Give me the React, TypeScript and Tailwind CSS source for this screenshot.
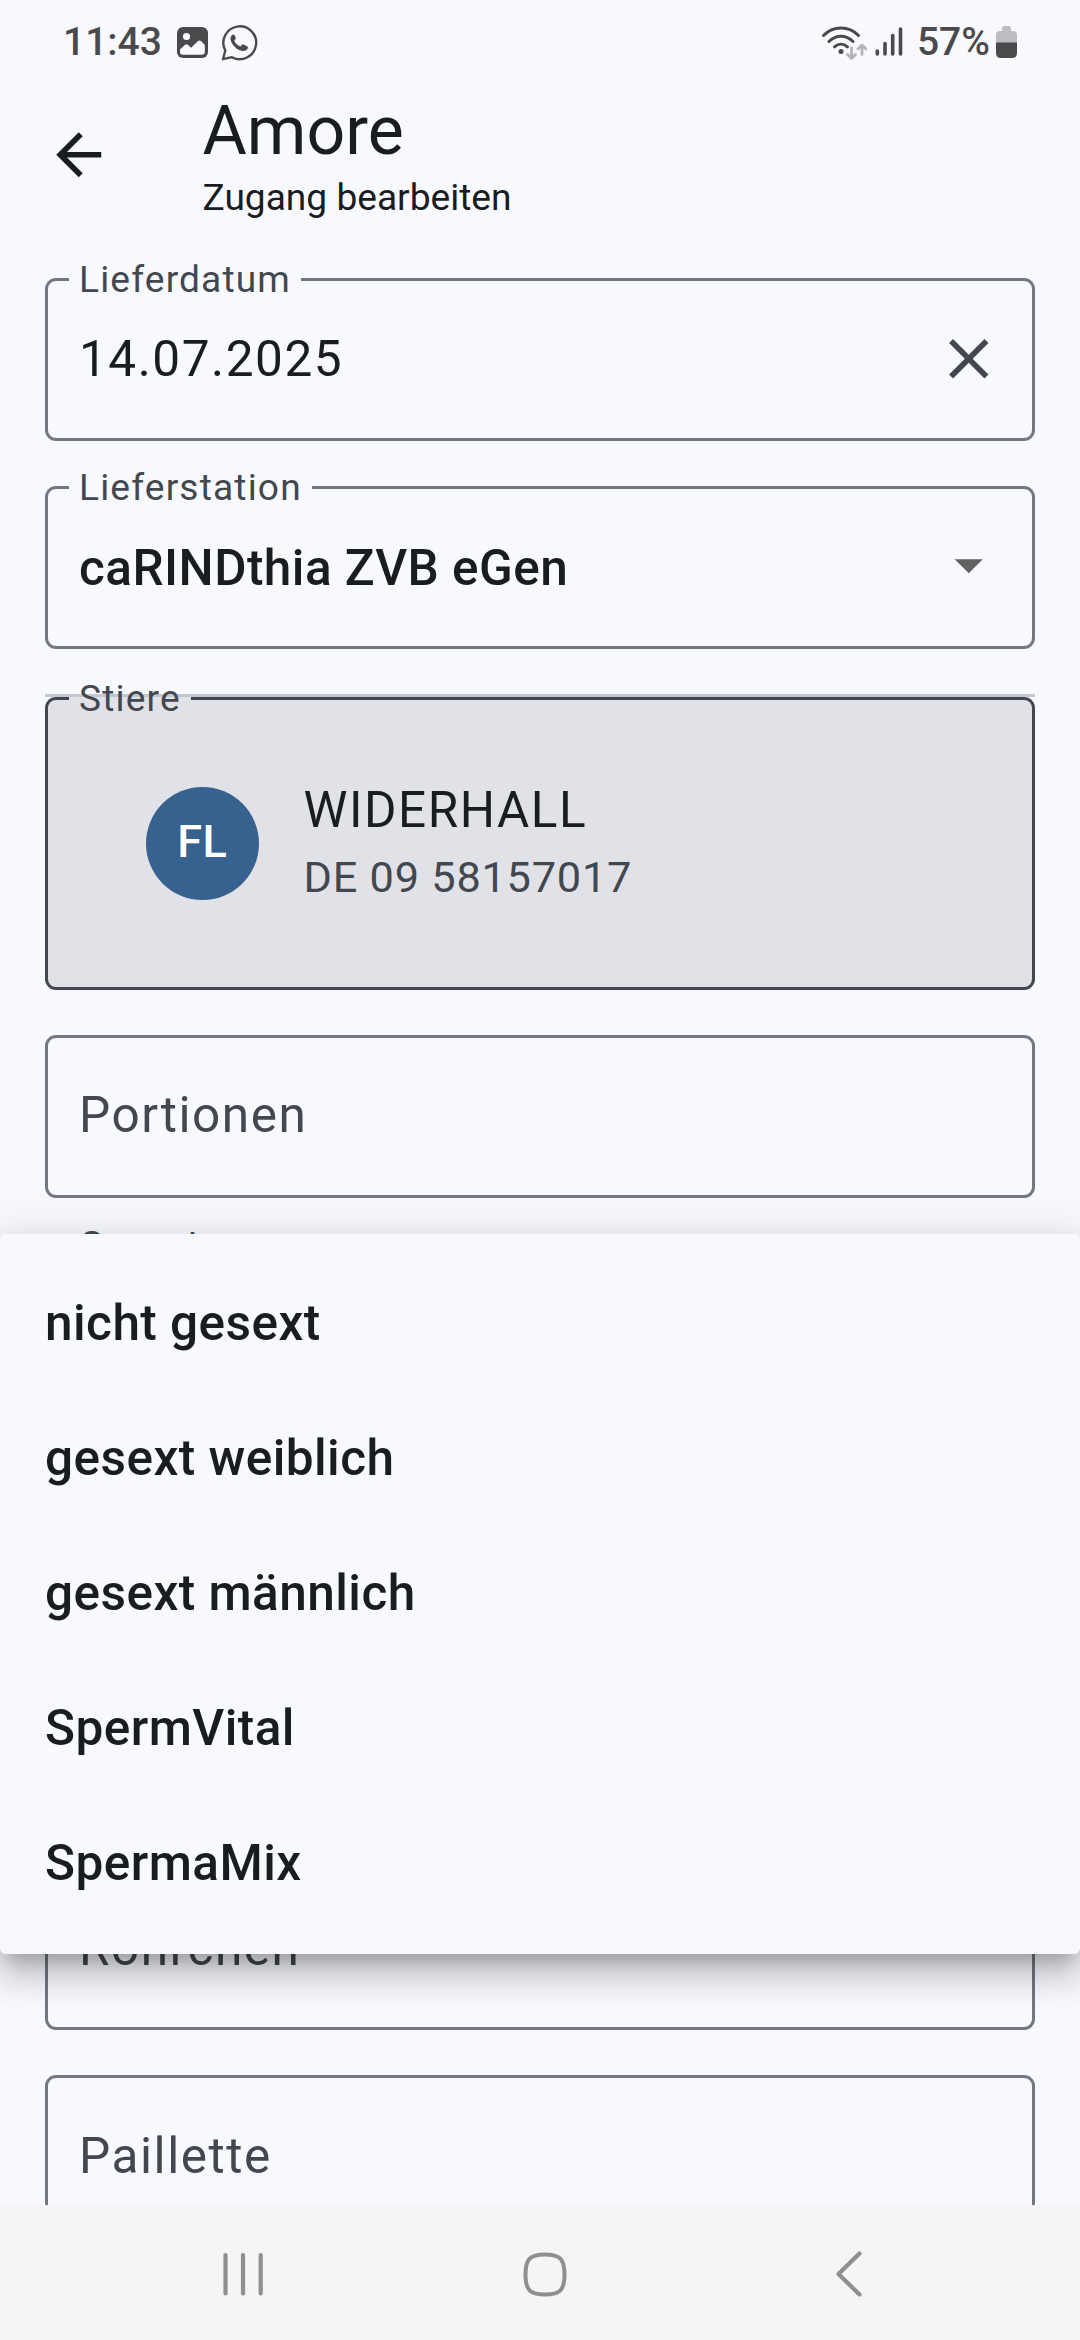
import React, { useState } from 'react';

const menuItems = ['nicht gesext', 'gesext weiblich', 'gesext männlich', 'SpermVital', 'SpermaMix'];

const CloseIcon = () => (
  <svg className="w-[67.5px] h-[67.5px]" viewBox="0 0 24 24" fill="#43474e">
    <path d="M19 6.41 17.59 5 12 10.59 6.41 5 5 6.41 10.59 12 5 17.59 6.41 19 12 13.41 17.59 19 19 17.59 13.41 12z" />
  </svg>
);

const DropDownIcon = () => (
  <svg className="w-[67.5px] h-[67.5px] mb-1" viewBox="0 0 24 24" fill="#616161">
    <path d="m7 10 5 5 5-5z" />
  </svg>
);

const StatusBar = () => (
  <div className="h-[84px] shrink-0 flex items-center justify-between pl-[63px] pr-[63px] text-[39px] font-medium text-[#4a4a4c]">
    <div className="flex items-center">
      <span className="w-[114px] leading-[46px]">11:43</span>
      <svg className="w-[31px] h-[31px]" viewBox="0 0 31 31">
        <rect width="31" height="31" rx="6" fill="#4a4a4c" />
        <circle cx="9.5" cy="9.5" r="3.6" fill="#f8f9ff" />
        <path d="M3 22.5 8 17.8q1.4-1 2.8 0l3.4 3L21 14q1.600-1.200 3 0l3.800 4v7q0 2.800-2.800 2.800H6q-3 0-3-2.800z" fill="#f8f9ff" />
      </svg>
      <svg className="ml-[13px] w-[37px] h-[37px]" viewBox="0 0 37 37" fill="none">
        <path d="M4.300 26.500A16.400 16.400 0 1 1 11 33.200L2 35.200z" stroke="#4a4a4c" strokeWidth="2.400" strokeLinejoin="round" />
        <path d="M12.500 10.500c-2 .4-3.200 2-3 4.300.4 5.600 6.700 11.800 12.500 12.200 2.700.2 4.600-1.200 4.900-3.200.1-.8-.1-1.200-.8-1.600l-3.600-1.700c-.7-.3-1.100-.2-1.600.4l-1.400 1.700c-3-1.200-5-3.200-6.300-5.900l1.300-1.600c.4-.5.4-.9.2-1.500l-1.300-2.600c-.2-.4-.5-.5-.9-.5z" fill="#4a4a4c" />
      </svg>
    </div>
    <div className="flex items-center">
      <svg className="w-[46px] h-[36px]" viewBox="0 0 46 36" fill="none" strokeLinecap="round">
        <g stroke="#4a4a4c" strokeWidth="3">
          <path d="M2.500 11.500C12 1.500 28 1.500 37.500 11.500" />
          <path d="M8 17.500C15 10.500 25 10.500 32 17.500" />
          <path d="M13.500 22.800C17.500 19.300 22.500 19.300 26.500 22.800" />
        </g>
        <circle cx="20" cy="27.500" r="2.500" fill="#4a4a4c" />
        <g stroke="#b4b5ba" strokeWidth="2.800" strokeLinejoin="round">
          <path d="M30.500 24v9.500M26.500 30.500l4 4 4-4" />
          <path d="M41 30.500V21.500M37 25l4-4 4 4" />
        </g>
      </svg>
      <svg className="ml-2 w-[28px] h-[30px]" viewBox="0 0 28 30" stroke="#4a4a4c" strokeWidth="3.600" strokeLinecap="round">
        <path d="M2.300 24v3M10 16.500v10.500M17.700 8.500v18.500M25.500 2v25" />
      </svg>
      <span className="ml-[14px] leading-[46px]">57%</span>
      <svg className="ml-[6px] w-[21px] h-[32px]" viewBox="0 0 21 32">
        <path d="M6 2q0-2 2-2h5q2 0 2 2v3h2q4 0 4 4v8H0V9q0-4 4-4h2z" fill="#bcbcc1" />
        <path d="M0 16.500h21V27q0 5-5 5H5q-5 0-5-5z" fill="#4a4a4c" />
      </svg>
    </div>
  </div>
);

const Header = () => (
  <header className="h-[167px] shrink-0 flex text-[#191c20]">
    <button aria-label="Zurück" className="ml-[45px] mt-[36.5px] w-[67.5px] h-[67.5px]">
      <svg className="w-full h-full" viewBox="0 0 24 24" fill="#191c20">
        <path d="M20 11H7.830l5.590-5.590L12 4l-8 8 8 8 1.410-1.410L7.830 13H20z" />
      </svg>
    </button>
    <div className="ml-[90px] pt-[7px] flex flex-col gap-[5px]">
      <h1 className="text-[68px] leading-[80px]">Amore</h1>
      <p className="text-[37.125px] leading-[43px]">Zugang bearbeiten</p>
    </div>
  </header>
);

const Legend = ({ children }: any) => (
  <legend className="h-[37px] px-[10px] text-[37.125px] leading-[37px] tracking-[1.16px] text-[#43474e]">{children}</legend>
);

const LabeledField = ({ label, className = '', children }: any) => (
  <fieldset className={`h-[180px] shrink-0 pl-[21px] rounded-[11px] border-3 border-[#73777f] ${className}`}>
    <Legend>{label}</Legend>
    <div className="h-[140px] pb-[18px] pl-[10px] pr-[30px] flex items-center justify-between">{children}</div>
  </fieldset>
);

const EmptyField = ({ label, className = '' }: any) => (
  <div className={`h-[163px] shrink-0 pl-[31px] flex items-center rounded-[11px] border-3 border-[#73777f] ${className}`}>
    <span className="text-[49.5px] leading-[58px] tracking-[1.547px] text-[#43474e]">{label}</span>
  </div>
);

const NavBar = () => (
  <nav className="h-[135px] shrink-0 bg-[#f5f5f7] flex items-center pt-[2px] pl-[223px]">
    <svg className="w-[40px] h-[46px]" viewBox="0 0 40 46" stroke="#8f8f8f" strokeWidth="4.200" strokeLinecap="round">
      <path d="M2.500 4v38.500M20 4v38.500M37.700 4v38.500" />
    </svg>
    <svg className="ml-[259px] w-[46px] h-[46px]" viewBox="0 0 46 46" fill="none" stroke="#8f8f8f" strokeWidth="4">
      <path d="M23 3.500C38 3.500 42.500 8 42.500 23.500S38 43.500 23 43.500 3.500 39 3.500 23.500 8 3.500 23 3.500z" />
    </svg>
    <svg className="ml-[266px] w-[30px] h-[50px]" viewBox="0 0 30 50" fill="none" stroke="#8f8f8f" strokeWidth="4.200" strokeLinecap="round" strokeLinejoin="round">
      <path d="M25.500 4.500 4.500 25l21 20.500" />
    </svg>
  </nav>
);

const App = () => {
  const [date, setDate] = useState('14.07.2025');
  const [menuOpen, setMenuOpen] = useState(true);

  return (
    <div className="relative w-[1080px] h-[2340px] overflow-hidden flex flex-col bg-[#f8f9ff] font-[Roboto,sans-serif]">
      <StatusBar />
      <Header />

      <main className="flex-1 min-h-0 overflow-hidden px-[45px] pt-[10px] flex flex-col">
        <LabeledField label="Lieferdatum">
          <span className="text-[49.5px] leading-[58px] tracking-[1.547px] text-[#191c20]">{date}</span>
          <button aria-label="Löschen" onClick={() => setDate('')}>
            <CloseIcon />
          </button>
        </LabeledField>

        <LabeledField label="Lieferstation" className="mt-[28px]">
          <span className="pt-px text-[49.5px] leading-[58px] tracking-[0.464px] font-medium text-[#191c20]">caRINDthia ZVB eGen</span>
          <DropDownIcon />
        </LabeledField>

        {/* Stiere */}
        <div className="relative mt-[31px] h-[310px] shrink-0">
          <div className="absolute left-0 right-0 top-[14px] h-[3px] bg-[#c3c7cf]" />
          <fieldset className="relative h-[310px] pl-[21px] rounded-[11px] border-3 border-[#43474e] bg-[#e1e2e7]">
            <Legend>Stiere</Legend>
            <div className="pl-[77px] pt-[64px] flex items-start gap-[45px]">
              <div className="mt-[6px] w-[112.5px] h-[112.5px] pb-[4px] rounded-full bg-[#37618e] flex items-center justify-center text-white text-[45px] font-medium tracking-[0.4px]">
                FL
              </div>
              <div className="flex flex-col gap-[13px]">
                <span className="text-[49.5px] leading-[58px] tracking-[1.547px] text-[#191c20]">WIDERHALL</span>
                <span className="text-[43.3px] leading-[51px] tracking-[0.77px] text-[#43474e]">DE 09 58157017</span>
              </div>
            </div>
          </fieldset>
        </div>

        <EmptyField label="Portionen" className="mt-[45px] pb-[3px]" />

        <LabeledField label="Gesext" className="mt-[28px]" />

        <EmptyField label="Röhrchen" className="mt-[461px] pb-px" />
        <EmptyField label="Paillette" className="mt-[45px] pb-px" />
      </main>

      {/* Auswahlmenü */}
      {menuOpen && (
        <ul className="absolute left-0 top-[1234px] w-full h-[720px] py-[22px] rounded-[6px] bg-[#f8f9ff] shadow-[0_14px_17px_-8px_rgba(0,0,0,0.2),0_22px_33px_3px_rgba(0,0,0,0.14),0_8px_46px_6px_rgba(0,0,0,0.12)]">
          {menuItems.map(item => (
            <li
              key={item}
              onClick={() => setMenuOpen(false)}
              className="h-[135px] px-[45px] pb-[2px] flex items-center text-[49.5px] leading-[58px] tracking-[0.464px] font-medium text-[#191c20] cursor-pointer"
            >
              {item}
            </li>
          ))}
        </ul>
      )}

      <NavBar />
    </div>
  );
};

export default App;
